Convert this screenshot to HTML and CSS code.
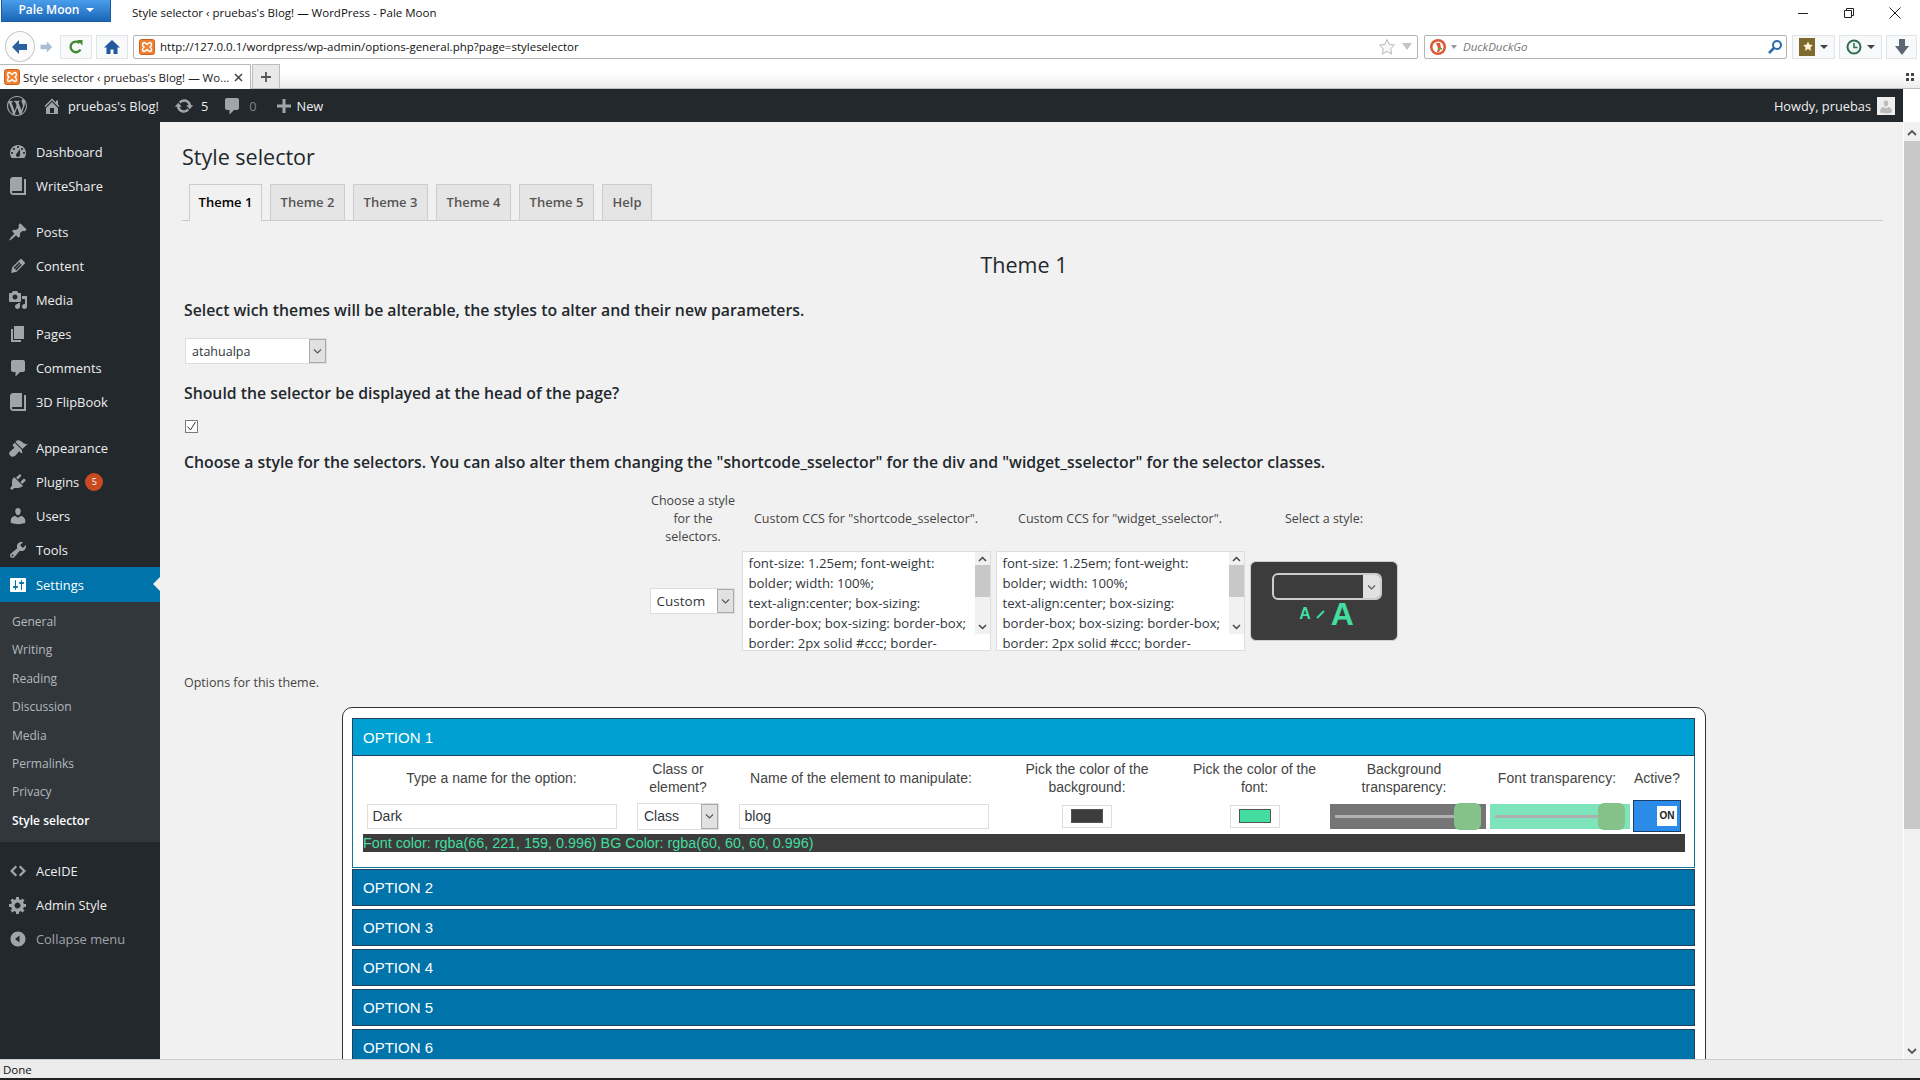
FILE: index.html
```html
<!DOCTYPE html>
<html lang="en">
<head>
  <meta charset="UTF-8">
  <title>Style selector ‹ pruebas's Blog! — WordPress - Pale Moon</title>
  <link rel="stylesheet" href="styles.css">
</head>
<body>

  <svg class="defs" xmlns="http://www.w3.org/2000/svg">
    <symbol id="i-wp" viewBox="0 0 20 20"><path d="M20 10c0-5.51-4.49-10-10-10C4.48 0 0 4.49 0 10c0 5.52 4.48 10 10 10 5.51 0 10-4.48 10-10zM7.78 15.37L4.37 6.22c.55-.02 1.17-.08 1.17-.08.5-.06.44-1.13-.06-1.11 0 0-1.45.11-2.37.11-.18 0-.37 0-.58-.01C4.12 2.69 6.87 1.11 10 1.11c2.33 0 4.45.87 6.05 2.34-.68-.11-1.65.39-1.65 1.58 0 .74.45 1.36.9 2.1.35.61.55 1.36.55 2.46 0 1.49-1.4 5-1.4 5l-3.03-8.37c.54-.02.82-.17.82-.17.5-.05.44-1.25-.06-1.22 0 0-1.44.12-2.38.12-.87 0-2.33-.12-2.33-.12-.5-.03-.56 1.2-.06 1.22l.92.08 1.26 3.41zM17.41 10c.24-.64.74-1.87.43-4.25.7 1.29 1.05 2.71 1.05 4.25 0 3.29-1.73 6.24-4.4 7.78.97-2.59 1.94-5.2 2.92-7.78zM6.1 18.09C3.12 16.65 1.11 13.53 1.11 10c0-1.3.23-2.48.72-3.59C3.25 10.3 4.67 14.2 6.1 18.09zm4.03-6.63l2.58 6.98c-.86.29-1.76.45-2.71.45-.79 0-1.57-.11-2.29-.33.81-2.38 1.62-4.74 2.42-7.1z"/></symbol>
    <symbol id="i-home" viewBox="0 0 20 20"><path d="M16 8.5l1.53 1.53-1.06 1.06L10 4.62l-6.47 6.47-1.06-1.06L10 2.5l4 4v-2h2v4zm-6-2.46l6 5.99V18H4v-5.97zM12 17v-5H8v5h4z"/></symbol>
    <symbol id="i-update" viewBox="0 0 20 20"><path d="M10.2 3.28c3.53 0 6.43 2.61 6.92 6h2.08l-3.5 4-3.5-4h2.32c-.45-1.97-2.21-3.44-4.32-3.44-1.45 0-2.73.71-3.54 1.78L4.95 5.66C6.23 4.2 8.11 3.28 10.2 3.28zm-.4 13.44c-3.52 0-6.43-2.61-6.92-6H.8l3.5-4c1.17 1.33 2.33 2.67 3.5 4H5.48c.45 1.97 2.21 3.44 4.32 3.44 1.45 0 2.73-.71 3.54-1.78l1.71 1.95c-1.28 1.46-3.15 2.39-5.25 2.39z"/></symbol>
    <symbol id="i-comment" viewBox="0 0 20 20"><path d="M5 2h10c1.1 0 2 .9 2 2v8c0 1.1-.9 2-2 2h-3l-4.5 4.5V14H5c-1.1 0-2-.9-2-2V4c0-1.1.9-2 2-2z"/></symbol>
    <symbol id="i-plus" viewBox="0 0 20 20"><path d="M17 8.5v3h-5.500V17h-3v-5.500H3v-3h5.500V3h3v5.500z"/></symbol>
    <symbol id="i-dash" viewBox="0 0 20 20"><path fill-rule="evenodd" d="M3.76 16h12.48c1.1-1.37 1.76-3.11 1.76-5 0-4.420-3.580-8-8-8s-8 3.580-8 8c0 1.890.66 3.630 1.760 5zM10 4c.55 0 1 .45 1 1s-.45 1-1 1-1-.45-1-1 .45-1 1-1zM6 6c.55 0 1 .45 1 1s-.45 1-1 1-1-.45-1-1 .45-1 1-1zm8 0c.55 0 1 .45 1 1s-.45 1-1 1-1-.45-1-1 .45-1 1-1zm-5.370 5.550L12 7v6c0 1.100-.9 2-2 2s-2-.9-2-2c0-.57.24-1.080.63-1.450zM4 10c.55 0 1 .45 1 1s-.45 1-1 1-1-.45-1-1 .45-1 1-1zm12 0c.55 0 1 .45 1 1s-.45 1-1 1-1-.45-1-1 .45-1 1-1z"/></symbol>
    <symbol id="i-book" viewBox="0 0 20 20"><path d="M16 3h2v16H5c-1.660 0-3-1.340-3-3V4c0-1.660 1.340-3 3-3h9v14H5c-.55 0-1 .45-1 1s.45 1 1 1h11V3z"/></symbol>
    <symbol id="i-pin" viewBox="0 0 20 20"><path d="M10.440 3.020l1.820-1.820 6.360 6.350-1.830 1.820c-1.050-.68-2.480-.57-3.410.36l-.75.75c-.92.93-1.040 2.350-.35 3.410l-1.830 1.820-2.410-2.410-2.800 2.790c-.42.42-3.380 2.710-3.800 2.290s1.860-3.390 2.280-3.810l2.790-2.790L4.100 9.360l1.830-1.820c1.050.69 2.480.57 3.400-.36l.75-.75c.93-.92 1.050-2.350.36-3.410z"/></symbol>
    <symbol id="i-edit" viewBox="0 0 20 20"><path d="M13.890 3.390l2.710 2.720c.46.46.42 1.240.03 1.640l-8.010 8.020-5.560 1.160 1.160-5.580s7.600-7.630 7.990-8.030c.39-.39 1.220-.39 1.680.07zm-2.730 2.790l-5.590 5.610 1.110 1.110 5.540-5.650zm-2.970 8.230l5.580-5.600-1.070-1.080-5.590 5.600z"/></symbol>
    <symbol id="i-media" viewBox="0 0 20 20"><path fill-rule="evenodd" d="M13 11V4c0-.55-.45-1-1-1h-1.670L9 1H5L3.670 3H2c-.55 0-1 .45-1 1v7c0 .55.45 1 1 1h10c.55 0 1-.45 1-1zM7 4.500c1.380 0 2.500 1.120 2.500 2.500S8.380 9.500 7 9.500 4.500 8.380 4.500 7 5.620 4.500 7 4.500zM14 6h5v10.500c0 1.380-1.120 2.500-2.500 2.500S14 17.880 14 16.500s1.120-2.500 2.500-2.500c.17 0 .34.02.5.05V9h-3V6zm-4 8.050V13h2v3.500c0 1.380-1.120 2.500-2.500 2.500S7 17.880 7 16.500 8.120 14 9.500 14c.17 0 .34.02.5.05z"/></symbol>
    <symbol id="i-page" viewBox="0 0 20 20"><path d="M6 15V2h10v13H6zm-1 1h8v2H3V5h2v11z"/></symbol>
    <symbol id="i-brush" viewBox="0 0 20 20"><path d="M14.480 11.060L7.410 3.990l1.500-1.500c.5-.56 2.300-.47 3.510.32 1.210.8 1.430 1.280 2.910 2.100 1.180.64 2.450 1.260 4.450.85zm-.71.71L6.700 4.700 4.930 6.470c-.39.39-.39 1.020 0 1.410l1.060 1.060c.39.39.39 1.030 0 1.420-.6.6-1.430 1.110-2.210 1.690-.35.26-.7.53-1.010.84C1.430 13.230.78 15 1.400 16.600c.3.78 1.100 1.580 1.880 1.880 1.600.62 3.370-.03 4.700-1.360.31-.31.58-.66.85-1.020.58-.78 1.090-1.610 1.690-2.210.39-.39 1.020-.39 1.410 0l1.060 1.060c.39.39 1.020.39 1.410 0z"/></symbol>
    <symbol id="i-plug" viewBox="0 0 20 20"><path d="M13.110 4.360L9.870 7.600 8 5.730l3.240-3.240c.35-.34 1.050-.2 1.560.32.52.51.66 1.210.31 1.550zm-8 1.770l.91-1.120 9.010 9.010-1.190.84c-.71.71-2.630 1.160-3.820 1.160H6.140L4.900 17.260c-.59.59-1.540.59-2.120 0-.59-.58-.59-1.530 0-2.120l1.240-1.240v-3.880c0-1.130.4-3.190 1.090-3.890zm7.260 3.970l3.240-3.240c.34-.35 1.040-.21 1.550.31.52.51.66 1.210.31 1.550l-3.240 3.250z"/></symbol>
    <symbol id="i-users" viewBox="0 0 20 20"><path d="M10 9.250c-2.270 0-2.730-3.440-2.730-3.440C7 4.020 7.820 2 9.970 2c2.160 0 2.980 2.020 2.710 3.810 0 0-.41 3.440-2.680 3.440zm0 2.570L12.720 10c2.390 0 4.520 2.330 4.520 4.530v2.490s-3.650 1.130-7.240 1.130c-3.650 0-7.240-1.130-7.240-1.130v-2.490c0-2.250 1.940-4.480 4.470-4.480z"/></symbol>
    <symbol id="i-tools" viewBox="0 0 20 20"><path fill-rule="evenodd" d="M16.68 9.770c-1.340 1.340-3.300 1.670-4.950.99l-5.410 6.520c-.99.99-2.590.99-3.580 0s-.99-2.590 0-3.570l6.520-5.420c-.68-1.650-.35-3.610.99-4.950 1.280-1.280 3.120-1.620 4.720-1.060l-2.890 2.890 2.820 2.820 2.860-2.870c.53 1.580.18 3.390-1.080 4.650zM3.810 16.210c.4.39 1.040.39 1.430 0 .4-.4.4-1.040 0-1.430-.39-.4-1.030-.4-1.430 0-.39.39-.39 1.030 0 1.430z"/></symbol>
    <symbol id="i-settings" viewBox="0 0 20 20"><path fill-rule="evenodd" d="M18 16V4c0-.55-.45-1-1-1H3c-.55 0-1 .45-1 1v12c0 .55.45 1 1 1h14c.55 0 1-.45 1-1zM8 11h1c.55 0 1 .45 1 1s-.45 1-1 1H8v1.500c0 .28-.22.5-.5.5s-.5-.22-.5-.5V13H6c-.55 0-1-.45-1-1s.45-1 1-1h1V5.500c0-.28.22-.5.5-.5s.5.22.5.5V11zm5-2h-1c-.55 0-1-.45-1-1s.45-1 1-1h1V5.500c0-.28.22-.5.5-.5s.5.22.5.5V7h1c.55 0 1 .45 1 1s-.45 1-1 1h-1v5.500c0 .28-.22.5-.5.5s-.5-.22-.5-.5V9z"/></symbol>
    <symbol id="i-code" viewBox="0 0 20 20"><path d="M7.500 4.500L2 10l5.500 5.500 1.600-1.600L5.200 10l3.900-3.900zM12.500 4.500L18 10l-5.500 5.500-1.600-1.600 3.900-3.900-3.900-3.900z"/></symbol>
    <symbol id="i-gear" viewBox="0 0 20 20"><path fill-rule="evenodd" d="M18 12h-2.180c-.17.7-.44 1.350-.81 1.930l1.540 1.540-2.100 2.100-1.540-1.540c-.58.36-1.230.63-1.910.79V19H8v-2.180c-.68-.16-1.330-.43-1.910-.79l-1.540 1.540-2.120-2.120 1.540-1.540c-.36-.58-.63-1.230-.79-1.910H1V9.030h2.170c.16-.7.44-1.350.8-1.940L2.430 5.550l2.100-2.100 1.540 1.540c.58-.37 1.240-.64 1.930-.81V2h3v2.180c.68.16 1.330.43 1.910.79l1.540-1.540 2.120 2.120-1.540 1.540c.36.59.64 1.240.8 1.940H18V12zm-8.500 1.500c1.660 0 3-1.340 3-3s-1.340-3-3-3-3 1.340-3 3 1.340 3 3 3z"/></symbol>
    <symbol id="i-collapse" viewBox="0 0 20 20"><path fill-rule="evenodd" d="M10 2.500c4.140 0 7.500 3.360 7.500 7.500s-3.360 7.500-7.500 7.500-7.500-3.360-7.500-7.500 3.360-7.500 7.500-7.500zm1.500 4L7 10l4.500 3.500z"/></symbol>
    <symbol id="i-xampp" viewBox="0 0 16 16"><rect x="0.500" y="0.500" width="15" height="15" rx="2" fill="#f08030" stroke="#c9601c"/><path d="M5 3.500c-2 .5-2 3 0 4.500-2 1.500-2 4 0 4.500 1.500 0 2-1 3-2 1 1 1.500 2 3 2 2-.5 2-3 0-4.500 2-1.500 2-4 0-4.500-1.500 0-2 1-3 2-1-1-1.500-2-3-2z" fill="none" stroke="#fff" stroke-width="1.500"/></symbol>
    <symbol id="i-arrow" viewBox="0 0 9 6"><path d="M1 1.500l3.500 3.500L8 1.500" fill="none" stroke="#555" stroke-width="1.100"/></symbol>
  </svg>

  <div class="titlebar">
    <div class="appbtn">Pale Moon <span class="appcaret"></span></div>
    <div class="wintitle">Style selector ‹ pruebas's Blog! — WordPress - Pale Moon</div>
    <div class="winctl">
      <svg width="12" height="12" viewBox="0 0 12 12"><path d="M1 6.500h10" stroke="#222" fill="none"/></svg>
      <svg width="12" height="12" viewBox="0 0 12 12"><path d="M1.500 3.500h7v7h-7zM3.500 3.500v-2h7v7h-2" stroke="#222" fill="none"/></svg>
      <svg width="12" height="12" viewBox="0 0 12 12"><path d="M.5.500l11 11M11.500.500l-11 11" stroke="#222" fill="none"/></svg>
    </div>
  </div>

  <div class="toolbar">
    <div class="backbtn">
      <svg width="18" height="16" viewBox="0 0 18 16"><path d="M8 1L1 8l7 7v-4h8V5H8z" fill="#2b5f9e"/></svg>
    </div>
    <svg class="fwd" width="14" height="14" viewBox="0 0 18 16"><path d="M10 1l7 7-7 7v-4H2V5h8z" fill="#a9bdd3"/></svg>
    <div class="navbtn">
      <svg width="16" height="16" viewBox="0 0 16 16"><path d="M12.500 10.500A5.300 5.300 0 1 1 11.500 4" fill="none" stroke="#3f8a2e" stroke-width="2.400"/><path d="M9 1h5.500v5.500z" fill="#3f8a2e"/></svg>
    </div>
    <div class="navbtn">
      <svg width="16" height="16" viewBox="0 0 16 16"><path d="M8 1L0 8.500h2.500V15h4v-4.500h3V15h4V8.500H16z" fill="#24589c"/></svg>
    </div>
    <div class="urlbar">
      <svg class="favicon" width="16" height="16"><use href="#i-xampp"/></svg>
      <span class="urltext">http://127.0.0.1/wordpress/wp-admin/options-general.php?page=styleselector</span>
      <svg width="18" height="18" viewBox="0 0 18 18"><path d="M9 1.500l2.300 4.900 5.200.7-3.800 3.600 1 5.300L9 13.400 4.300 16l1-5.300-3.800-3.600 5.200-.7z" fill="#f7f7f7" stroke="#b9b9b9"/></svg>
      <span class="ddcaret"></span>
    </div>
    <div class="searchbar">
      <svg width="18" height="18" viewBox="0 0 18 18"><circle cx="9" cy="9" r="8" fill="#de5833"/><circle cx="9" cy="9" r="5.500" fill="#fff"/><path d="M7 5h4l1 5-2 4H8l1-4z" fill="#de5833"/><path d="M9 10h4v1.500H9z" fill="#5fa83c"/></svg>
      <span class="smallcaret"></span>
      <span class="searchtext">DuckDuckGo</span>
      <svg width="16" height="16" viewBox="0 0 16 16"><circle cx="10" cy="6" r="4" fill="none" stroke="#2b6ca8" stroke-width="2"/><path d="M7 9l-5 5" stroke="#2b6ca8" stroke-width="2.500"/></svg>
    </div>
    <div class="toolbtn">
      <svg width="16" height="18" viewBox="0 0 16 18"><rect width="16" height="18" fill="#7d6a2c"/><path d="M9 3.500l1.500 3.200 3.300.4-2.400 2.300.6 3.400L9 11.100l-3 1.700.6-3.400-2.400-2.300 3.300-.4z" fill="#fff6d5"/></svg>
      <span class="smallcaret dark"></span>
    </div>
    <div class="toolbtn">
      <svg width="16" height="16" viewBox="0 0 16 16"><circle cx="8" cy="8" r="6.500" fill="#eef6ee" stroke="#2d6a58" stroke-width="2"/><path d="M8 4v4.500h3.500" fill="none" stroke="#2d6a58" stroke-width="1.500"/></svg>
      <span class="smallcaret dark"></span>
    </div>
    <div class="toolbtn last">
      <svg width="16" height="18" viewBox="0 0 16 18"><path d="M5 1h6v7h4l-7 9-7-9h4z" fill="#5b6672"/></svg>
    </div>
  </div>

  <div class="tabbar">
    <div class="tab">
      <svg width="16" height="16"><use href="#i-xampp"/></svg>
      <span class="tabtext">Style selector ‹ pruebas's Blog! — Wo...</span>
      <svg width="9" height="9" viewBox="0 0 9 9"><path d="M1 1l7 7M8 1L1 8" stroke="#444" stroke-width="1.500"/></svg>
    </div>
    <div class="newtab">
      <svg width="12" height="12" viewBox="0 0 12 12"><path d="M6 1v10M1 6h10" stroke="#555" stroke-width="1.800"/></svg>
    </div>
    <div class="tabdots">
      <svg width="8" height="8" viewBox="0 0 8 8"><path d="M0 0h3v3H0zM5 0h3v3H5zM0 5h3v3H0zM5 5h3v3H5z" fill="#444"/></svg>
    </div>
  </div>

  <div class="adminbar">
    <svg class="ab-logo"><use href="#i-wp"/></svg>
    <svg class="ab-home"><use href="#i-home"/></svg>
    <span class="ab-site">pruebas's Blog!</span>
    <svg class="ab-update"><use href="#i-update"/></svg>
    <span class="ab-num">5</span>
    <svg class="ab-comment"><use href="#i-comment"/></svg>
    <span class="ab-num dim">0</span>
    <svg class="ab-plus"><use href="#i-plus"/></svg>
    <span class="ab-new">New</span>
    <span class="ab-howdy">Howdy, pruebas</span>
    <div class="avatar">
      <svg width="16" height="16" viewBox="0 0 20 20"><use href="#i-users"/></svg>
    </div>
  </div>

  <div class="wpbody">
    <nav class="sidebar">
      <ul class="menu">
        <li class="mi"><svg class="mi-icon"><use href="#i-dash"/></svg>Dashboard</li>
        <li class="mi"><svg class="mi-icon"><use href="#i-book"/></svg>WriteShare</li>
        <li class="mi sep"><svg class="mi-icon"><use href="#i-pin"/></svg>Posts</li>
        <li class="mi"><svg class="mi-icon"><use href="#i-edit"/></svg>Content</li>
        <li class="mi"><svg class="mi-icon"><use href="#i-media"/></svg>Media</li>
        <li class="mi"><svg class="mi-icon"><use href="#i-page"/></svg>Pages</li>
        <li class="mi"><svg class="mi-icon"><use href="#i-comment"/></svg>Comments</li>
        <li class="mi"><svg class="mi-icon"><use href="#i-book"/></svg>3D FlipBook</li>
        <li class="mi sep"><svg class="mi-icon"><use href="#i-brush"/></svg>Appearance</li>
        <li class="mi"><svg class="mi-icon"><use href="#i-plug"/></svg>Plugins <span class="badge">5</span></li>
        <li class="mi"><svg class="mi-icon"><use href="#i-users"/></svg>Users</li>
        <li class="mi"><svg class="mi-icon"><use href="#i-tools"/></svg>Tools</li>
        <li class="mi current"><svg class="mi-icon"><use href="#i-settings"/></svg>Settings</li>
      </ul>
      <ul class="submenu">
        <li>General</li>
        <li>Writing</li>
        <li>Reading</li>
        <li>Discussion</li>
        <li>Media</li>
        <li>Permalinks</li>
        <li>Privacy</li>
        <li class="on">Style selector</li>
      </ul>
      <ul class="menu lower">
        <li class="mi tall"><svg class="mi-icon"><use href="#i-code"/></svg>AceIDE</li>
        <li class="mi"><svg class="mi-icon"><use href="#i-gear"/></svg>Admin Style</li>
        <li class="mi collapse"><svg class="mi-icon"><use href="#i-collapse"/></svg>Collapse menu</li>
      </ul>
    </nav>

    <main class="wrap">
      <h1 class="pagetitle">Style selector</h1>
      <div class="tabs">
        <span class="navtab active">Theme 1</span>
        <span class="navtab">Theme 2</span>
        <span class="navtab">Theme 3</span>
        <span class="navtab">Theme 4</span>
        <span class="navtab">Theme 5</span>
        <span class="navtab help">Help</span>
      </div>

      <div class="content">
        <h2 class="themetitle">Theme 1</h2>
        <p class="lead first">Select wich themes will be alterable, the styles to alter and their new parameters.</p>
        <div class="select theme-select"><span>atahualpa</span><i class="selarrow"><svg width="9" height="6"><use href="#i-arrow"/></svg></i></div>
        <p class="lead second">Should the selector be displayed at the head of the page?</p>
        <div class="check"><svg width="11" height="11" viewBox="0 0 11 11"><path d="M1.500 5.500l3 3.500 5-8" fill="none" stroke="#333" stroke-width="1"/></svg></div>
        <p class="lead third">Choose a style for the selectors. You can also alter them changing the "shortcode_sselector" for the div and "widget_sselector" for the selector classes.</p>

        <div class="styletable">
          <div class="st-head choose">Choose a style for the selectors.</div>
          <div class="st-head">Custom CCS for "shortcode_sselector".</div>
          <div class="st-head">Custom CCS for "widget_sselector".</div>
          <div class="st-head">Select a style:</div>

          <div class="select custom-select"><span>Custom</span><i class="selarrow"><svg width="9" height="6"><use href="#i-arrow"/></svg></i></div>
          <div class="cssbox">
            <div class="csstext">font-size: 1.25em; font-weight:<br>bolder; width: 100%;<br>text-align:center; box-sizing:<br>border-box; box-sizing: border-box;<br>border: 2px solid #ccc; border-</div>
            <div class="fakescroll"><svg width="9" height="6" viewBox="0 0 9 6"><path d="M1 5l3.500-3.500L8 5" fill="none" stroke="#444" stroke-width="1.500"/></svg><b></b><svg class="sc-down" width="9" height="6"><path d="M1 1l3.500 3.500L8 1" fill="none" stroke="#444" stroke-width="1.500"/></svg></div>
          </div>
          <div class="cssbox">
            <div class="csstext">font-size: 1.25em; font-weight:<br>bolder; width: 100%;<br>text-align:center; box-sizing:<br>border-box; box-sizing: border-box;<br>border: 2px solid #ccc; border-</div>
            <div class="fakescroll"><svg width="9" height="6" viewBox="0 0 9 6"><path d="M1 5l3.500-3.500L8 5" fill="none" stroke="#444" stroke-width="1.500"/></svg><b></b><svg class="sc-down" width="9" height="6"><path d="M1 1l3.500 3.500L8 1" fill="none" stroke="#444" stroke-width="1.500"/></svg></div>
          </div>
          <div class="preview">
            <div class="pv-select"><i class="pv-arrow"><svg width="9" height="6"><use href="#i-arrow"/></svg></i></div>
            <div class="pv-sizes"><span class="pv-a">A</span><svg width="10" height="10" viewBox="0 0 10 10"><path d="M1 9l7-7" stroke="#42dd9f" stroke-width="2"/></svg><span class="pv-b">A</span></div>
          </div>
        </div>

        <p class="optnote">Options for this theme.</p>

        <div class="panel">
          <div class="opt open">OPTION 1</div>
          <div class="optbody">
            <div class="optgrid">
              <div class="lbl">Type a name for the option:</div>
              <div class="lbl">Class or element?</div>
              <div class="lbl">Name of the element to manipulate:</div>
              <div class="lbl">Pick the color of the background:</div>
              <div class="lbl">Pick the color of the font:</div>
              <div class="lbl">Background transparency:</div>
              <div class="lbl">Font transparency:</div>
              <div class="lbl">Active?</div>

              <div class="txt">Dark</div>
              <div class="select class-select"><span>Class</span><i class="selarrow"><svg width="9" height="6"><use href="#i-arrow"/></svg></i></div>
              <div class="txt elem">blog</div>
              <div class="swatch"><i class="sw-dark"></i></div>
              <div class="swatch"><i class="sw-green"></i></div>
              <div class="slider sl-bg"><i class="track"></i><i class="thumb"></i></div>
              <div class="slider sl-font"><i class="track"></i><i class="thumb"></i></div>
              <div class="toggle"><span>ON</span></div>
            </div>
            <div class="colorinfo">Font color: rgba(66, 221, 159, 0.996) BG Color: rgba(60, 60, 60, 0.996)</div>
          </div>
          <div class="opt">OPTION 2</div>
          <div class="opt">OPTION 3</div>
          <div class="opt">OPTION 4</div>
          <div class="opt">OPTION 5</div>
          <div class="opt">OPTION 6</div>
        </div>
      </div>
    </main>

    <div class="pagescroll">
      <svg width="10" height="7" viewBox="0 0 10 7"><path d="M1 6l4-4 4 4" fill="none" stroke="#555" stroke-width="1.800"/></svg>
      <b></b>
      <svg class="sc-down" width="10" height="7" viewBox="0 0 10 7"><path d="M1 1l4 4 4-4" fill="none" stroke="#555" stroke-width="1.800"/></svg>
    </div>
  </div>

  <div class="statusbar">Done</div>

</body>
</html>
```

FILE: styles.css
```css
* {
  box-sizing: border-box;
}

html, body {
  margin: 0;
  height: 100%;
}

body {
  display: flex;
  flex-direction: column;
  height: 1080px;
  overflow: hidden;
  font-family: "Open Sans", sans-serif;
  font-size: 13px;
  color: #333;
  background: #fff;
}

ul {
  list-style: none;
  margin: 0;
  padding: 0;
}

.defs {
  display: none;
}

/* browser chrome */
.titlebar {
  display: flex;
  align-items: flex-start;
  height: 30px;
  padding-left: 1px;
}

.appbtn {
  width: 110px;
  height: 22px;
  padding-top: 1px;
  text-align: center;
  font-size: 12px;
  font-weight: 600;
  color: #fff;
  background: linear-gradient(#4a9eea, #1a66b8);
  border: 1px solid #1e5a9c;
  border-top: 0;
}

.appcaret {
  display: inline-block;
  margin-left: 3px;
  vertical-align: 2px;
  border: 4px solid transparent;
  border-top: 4px solid #fff;
  border-bottom: 0;
}

.wintitle {
  margin: 5px 0 0 21px;
  font-size: 11.5px;
  color: #111;
}

.winctl {
  display: flex;
  gap: 34px;
  margin: 7px 0 0 auto;
  padding-right: 19px;
}

.toolbar {
  display: flex;
  align-items: center;
  height: 33px;
  padding-left: 5px;
}

.backbtn {
  display: flex;
  align-items: center;
  justify-content: center;
  width: 30px;
  height: 31px;
  border: 1px solid #c4c9d0;
  border-radius: 50%;
  background: #fbfbfb;
}

.fwd {
  margin: 0 7px 0 4px;
}

.navbtn, .toolbtn {
  display: flex;
  align-items: center;
  justify-content: center;
  gap: 5px;
  width: 32px;
  height: 24px;
  margin-right: 4px;
  border: 1px solid #e2e5e8;
  background: #f8f9fa;
}

.urlbar, .searchbar {
  display: flex;
  align-items: center;
  height: 24px;
  border: 1px solid #b4b4b4;
  border-radius: 2px;
  background: #fff;
}

.urlbar {
  width: 1285px;
  margin-left: 1px;
  padding: 0 5px;
}

.favicon {
  flex: none;
}

.urltext {
  flex: 1;
  margin-left: 5px;
  font-size: 11.5px;
  color: #111;
}

.ddcaret {
  margin-left: 6px;
  border: 5px solid transparent;
  border-top: 7px solid #c4c4c4;
  border-bottom: 0;
}

.searchbar {
  width: 363px;
  margin: 0 5px 0 6px;
  padding: 0 3px 0 4px;
}

.smallcaret {
  margin-left: 4px;
  border: 3px solid transparent;
  border-top: 4px solid #999;
  border-bottom: 0;
}

.smallcaret.dark {
  margin-left: 0;
  border-width: 4px 4px 0;
  border-top-color: #444;
}

.searchtext {
  flex: 1;
  margin-left: 6px;
  font-size: 11.5px;
  font-style: italic;
  color: #777;
}

.toolbtn {
  width: 43px;
}

.toolbtn.last {
  width: 31px;
  margin-right: 0;
}

.tabbar {
  display: flex;
  align-items: flex-end;
  height: 26px;
  background: linear-gradient(#fff 40%, #ececec);
  border-bottom: 1px solid #bdbdbd;
}

.tab {
  display: flex;
  align-items: center;
  width: 251px;
  height: 25px;
  margin-bottom: -1px;
  padding: 0 7px 0 4px;
  background: #fff;
  border: 1px solid #b9b9b9;
  border-bottom: 0;
  border-left: 0;
}

.tabtext {
  flex: 1;
  margin-left: 3px;
  font-size: 11.5px;
  color: #222;
  white-space: nowrap;
}

.newtab {
  display: flex;
  align-items: center;
  justify-content: center;
  width: 28px;
  height: 24px;
  margin-left: 1px;
  background: #e9e9e9;
  border: 1px solid #bdbdbd;
  border-bottom: 0;
}

.tabdots {
  margin: 0 6px 7px auto;
  line-height: 0;
}

.adminbar {
  display: flex;
  align-items: center;
  flex: none;
  height: 33px;
  padding: 1px 0 0 7px;
  margin-right: 17px;
  font-size: 12.8px;
  color: #eee;
  background: #23282d;
}

.adminbar svg {
  fill: #a0a5aa;
  width: 20px;
  height: 20px;
  flex: none;
}

.ab-home {
  margin-left: 15px;
}

.ab-site {
  margin-left: 6px;
}

.ab-update {
  margin-left: 15px;
}

.ab-num {
  margin-left: 7px;
}

.ab-num.dim {
  color: #7d8388;
}

.ab-comment {
  margin-left: 14px;
}

.ab-plus {
  margin-left: 17px;
}

.ab-new {
  margin-left: 3px;
}

.ab-howdy {
  margin-left: auto;
}

.avatar {
  display: flex;
  align-items: flex-end;
  justify-content: center;
  width: 18px;
  height: 18px;
  margin: 0 8px 0 6px;
  background: #eee;
}

.adminbar .avatar svg {
  width: 16px;
  height: 16px;
  fill: #bbb;
}

.wpbody {
  display: flex;
  flex: 1;
  min-height: 0;
  background: #f1f1f1;
}

/* admin menu */
.sidebar {
  flex: none;
  width: 160px;
  padding-top: 13px;
  background: #23282d;
  color: #eee;
}

.mi {
  display: flex;
  align-items: center;
  height: 34px;
  font-size: 12.9px;
  position: relative;
}

.mi.sep {
  margin-top: 12px;
}

.mi.tall {
  height: 35px;
}

.mi-icon {
  flex: none;
  width: 20px;
  height: 20px;
  margin: 0 8px 0 8px;
  fill: #a0a5aa;
}

.badge {
  display: inline-block;
  width: 18px;
  height: 18px;
  margin-left: 6px;
  border-radius: 50%;
  background: #ca4a1f;
  color: #fff;
  font-size: 9px;
  line-height: 18px;
  text-align: center;
}

.mi.current {
  height: 35px;
  color: #fff;
  background: #0073aa;
}

.mi.current .mi-icon {
  fill: #fff;
}

/* little notch pointing at the page */
.mi.current::after {
  content: "";
  position: absolute;
  right: 0;
  top: 10px;
  border: 7px solid transparent;
  border-right-color: #f1f1f1;
  border-left: 0;
}

.mi.collapse {
  color: #a0a5aa;
}

.submenu {
  padding: 6px 0 7px;
  background: #32373c;
  color: #b4b9be;
  font-size: 12px;
}

.submenu li {
  height: 28.4px;
  padding-left: 12px;
  line-height: 28px;
}

.submenu li.on {
  color: #fff;
  font-weight: 600;
}

.menu.lower {
  margin-top: 11px;
}

/* page body */
.wrap {
  flex: 1;
  min-width: 0;
  overflow: hidden;
  padding: 0 20px 0 22px;
  border-right: 1px solid #fff;
}

.pagetitle {
  margin: 20px 0 0;
  font-size: 21.5px;
  font-weight: 400;
  line-height: 30px;
  color: #23282d;
}

.tabs {
  display: flex;
  gap: 8px;
  height: 37px;
  margin-top: 12px;
  padding-left: 7px;
  border-bottom: 1px solid #ccc;
}

.navtab {
  height: 36px;
  width: 75px;
  font-size: 13px;
  font-weight: 600;
  line-height: 34px;
  text-align: center;
  white-space: nowrap;
  color: #555;
  background: #e5e5e5;
  border: 1px solid #ccc;
  border-bottom: 0;
}

.navtab.active {
  width: 73px;
  height: 37px;
  color: #000;
  background: #f1f1f1;
}

.navtab.help {
  width: 50px;
}

.content {
  margin-right: 19px;
  padding-left: 2px;
}

.themetitle {
  margin: 31px 0 0;
  font-size: 21.5px;
  font-weight: 400;
  line-height: 26px;
  text-align: center;
  color: #23282d;
}

.lead {
  margin: 0;
  font-size: 15.8px;
  font-weight: 600;
  line-height: 20px;
  color: #23282d;
}

.lead.first {
  margin-top: 22px;
}

.lead.second {
  margin-top: 19px;
}

.lead.third {
  margin-top: 19px;
}

.select {
  display: flex;
  align-items: center;
  background: #fff;
  border: 1px solid #ddd;
  font-size: 13px;
  color: #32373c;
}

.select span {
  flex: 1;
  padding-left: 6px;
}

.selarrow {
  display: flex;
  align-items: center;
  justify-content: center;
  width: 17px;
  height: 100%;
  background: #e1e1e1;
  border: 1px solid #aaa;
}

.theme-select {
  width: 142px;
  height: 26px;
  margin-top: 18px;
  margin-left: 1px;
  font-size: 12.5px;
}

.check {
  display: flex;
  align-items: center;
  justify-content: center;
  width: 13px;
  height: 13px;
  margin: 17px 0 0 1px;
  background: #fff;
  border: 1px solid #7a7a7a;
}

.styletable {
  display: grid;
  grid-template-columns: 87px 249px 249px 149px;
  column-gap: 5px;
  justify-content: center;
  align-items: center;
  margin-top: 20px;
}

.st-head {
  padding-bottom: 5px;
  font-size: 12.5px;
  line-height: 18px;
  text-align: center;
  white-space: nowrap;
  color: #444;
}

.st-head.choose {
  white-space: normal;
}

.custom-select {
  width: 85px;
  height: 26px;
  font-size: 13.5px;
}

.cssbox {
  display: flex;
  height: 100px;
  background: #fff;
  border: 1px solid #ddd;
}

.csstext {
  flex: 1;
  padding: 1px 0 0 6px;
  font-size: 13.2px;
  line-height: 20px;
  white-space: nowrap;
  color: #32373c;
}

.fakescroll {
  display: flex;
  flex-direction: column;
  align-items: center;
  flex: none;
  width: 15px;
  height: 82px;
  padding-top: 4px;
  background: #f1f1f1;
}

.fakescroll b {
  width: 100%;
  height: 32px;
  margin-top: 3px;
  background: #c8c8c8;
}

.fakescroll .sc-down {
  margin-top: auto;
  margin-bottom: 4px;
}

.preview {
  display: flex;
  flex-direction: column;
  align-items: center;
  width: 148px;
  height: 80px;
  padding: 11px 0 0 6px;
  background: #3c3c3c;
  border: 1px solid #cfcfcf;
  border-radius: 6px;
}

.pv-select {
  display: flex;
  justify-content: flex-end;
  flex: none;
  width: 110px;
  height: 27px;
  border: 2px solid #ccc;
  border-radius: 6px;
  overflow: hidden;
}

.pv-arrow {
  display: flex;
  align-items: center;
  justify-content: center;
  width: 17px;
  background: #e1e1e1;
}

.pv-sizes {
  display: flex;
  align-items: center;
  gap: 5px;
  height: 28px;
  font-family: "Liberation Sans", sans-serif;
  font-weight: 700;
  color: #42dd9f;
}

.pv-a {
  font-size: 16px;
}

.pv-b {
  font-size: 32px;
}

.optnote {
  margin: 23px 0 0;
  font-size: 12.5px;
  line-height: 18px;
  color: #444;
}

/* options accordion */
.panel {
  width: 1364px;
  margin: 15px auto 0;
  padding: 10px 10px 10px 9px;
  background: #fff;
  border: 1px solid #333;
  border-radius: 10px;
  font-family: "Liberation Sans", sans-serif;
}

.opt {
  height: 37px;
  margin-bottom: 3px;
  padding-left: 10px;
  font-size: 15px;
  line-height: 36px;
  color: #fff;
  background: #0073aa;
  border: 1px solid #23415a;
}

.opt.open {
  height: 38px;
  margin-bottom: 0;
  line-height: 37px;
  background: #00a0d2;
}

.optbody {
  height: 112px;
  margin-bottom: 1px;
  padding: 0 9px 0 10px;
  border: 1px solid #0c7a99;
  border-top: 0;
}

.optgrid {
  display: grid;
  grid-template-columns: 259px 114px 252px 200px 135px 166px 144px 50px;
  grid-template-rows: 44px 32px;
  justify-items: center;
  align-items: center;
  margin-left: -1px;
}

.lbl {
  font-size: 14px;
  line-height: 18px;
  text-align: center;
  color: #444;
}

.lbl:nth-child(1) { width: 200px; }
.lbl:nth-child(2) { width: 80px; }
.lbl:nth-child(3) { width: 240px; }
.lbl:nth-child(4), .lbl:nth-child(5) { width: 130px; }
.lbl:nth-child(6) { width: 100px; margin-right: 2px; }
.lbl:nth-child(7) { width: 130px; margin-right: 6px; letter-spacing: 0.1px; }

.txt {
  width: 250px;
  height: 25px;
  padding-left: 5px;
  font-size: 14px;
  line-height: 23px;
  color: #32373c;
  background: #fff;
  border: 1px solid #ddd;
}

.txt.elem {
  margin-left: 5px;
}

.class-select {
  width: 82px;
  height: 27px;
  font-size: 14px;
}

.swatch {
  display: flex;
  align-items: center;
  justify-content: center;
  width: 50px;
  height: 23px;
  background: #fff;
  border: 1px solid #ddd;
}

.swatch i {
  width: 32px;
  height: 14px;
  border: 1px solid #555;
}

.sw-dark {
  background: #3c3c3c;
}

.sw-green {
  background: #42dd9f;
}

.slider {
  display: flex;
  align-items: center;
  justify-content: space-between;
  height: 25px;
  padding: 0 5px;
}

.sl-bg {
  width: 156px;
  margin-left: 5px;
  background: #757575;
}

.sl-font {
  width: 140px;
  background: #7de4bb;
}

.track {
  flex: 1;
  height: 3px;
  background: #b0b0b0;
}

.thumb {
  width: 27px;
  height: 27px;
  margin: -2px 0;
  background: #84c28a;
  border-radius: 6px;
}

.toggle {
  display: flex;
  align-items: center;
  justify-content: flex-end;
  flex: none;
  width: 48px;
  height: 32px;
  padding-right: 3px;
  background: #2b8be8;
  border: 1px solid #1d3d66;
}

.toggle span {
  width: 20px;
  height: 20px;
  font-size: 10px;
  font-weight: 700;
  line-height: 20px;
  text-align: center;
  color: #222;
  background: #fff;
}

.colorinfo {
  height: 18px;
  margin-top: 2px;
  font-size: 14.35px;
  line-height: 18px;
  color: #42dd9f;
  background: #3c3c3c;
}

.pagescroll {
  display: flex;
  flex-direction: column;
  align-items: center;
  flex: none;
  width: 16px;
  padding-top: 7px;
  background: #f1f1f1;
}

.pagescroll b {
  width: 100%;
  height: 688px;
  margin-top: 5px;
  background: #c8c8c8;
}

.pagescroll .sc-down {
  margin-top: auto;
  margin-bottom: 4px;
}

.statusbar {
  flex: none;
  height: 21px;
  padding-left: 3px;
  font-size: 11.5px;
  line-height: 19px;
  color: #111;
  background: #ececec;
  border-top: 1px solid #ccc;
  border-bottom: 2px solid #222;
}
```
